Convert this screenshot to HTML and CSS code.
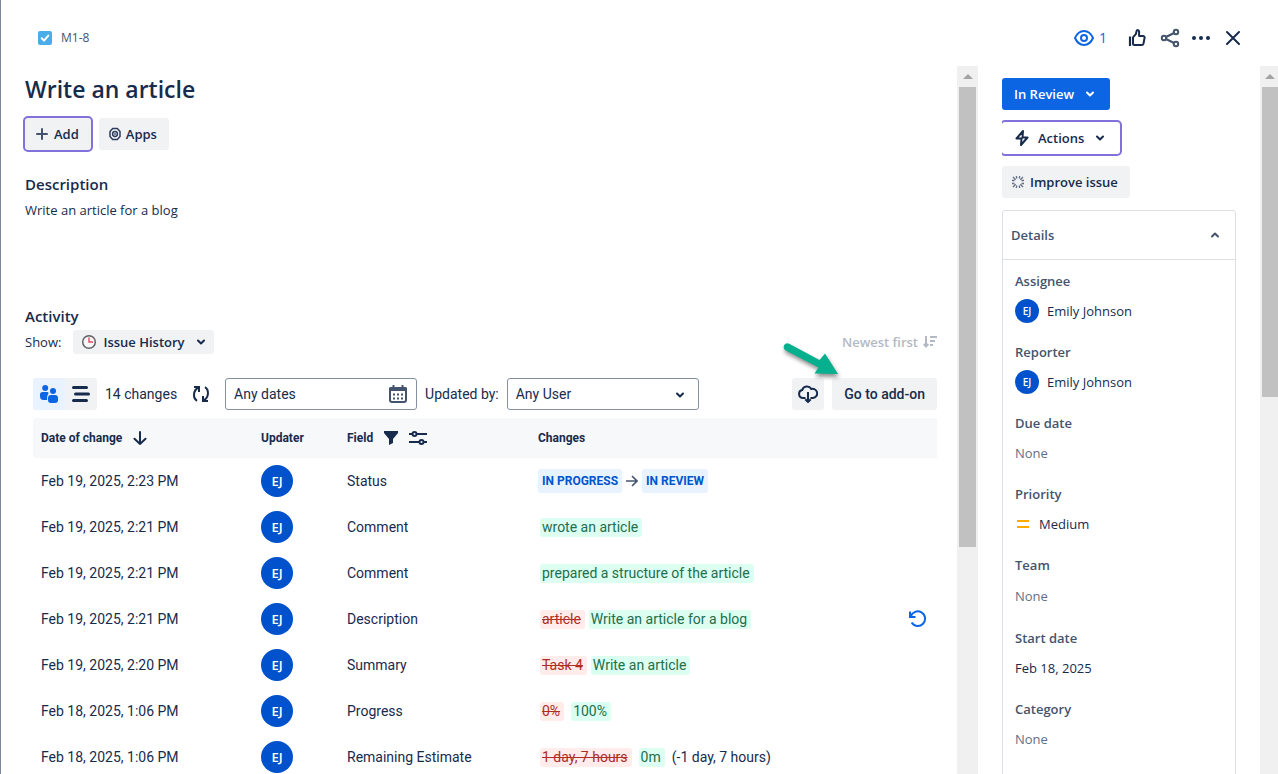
FILE: index.html
```html
<!DOCTYPE html>
<html lang="en">
<head>
<meta charset="utf-8">
<title>M1-8 Write an article</title>
<link rel="stylesheet" href="styles.css">
</head>
<body>
<div class="dialog">
  <header class="topbar">
    <a class="key" href="#">
      <svg width="14" height="14" viewBox="0 0 14 14"><rect width="14" height="14" rx="2" fill="#4bade8"/><path d="M3.7 7.3 6 9.6 10.3 4.6" fill="none" stroke="#fff" stroke-width="2" stroke-linecap="round" stroke-linejoin="round"/></svg>
      <span>M1-8</span>
    </a>
    <div class="top-actions">
      <button class="watch" aria-label="Watchers">
        <svg width="20" height="16" viewBox="0 0 20 16" fill="none" stroke="#0c66e4" stroke-width="2"><path d="M1 8C3 3.500 6.300 1 10 1s7 2.500 9 7c-2 4.500-5.300 7-9 7s-7-2.500-9-7z"/><circle cx="10" cy="8" r="3"/></svg>
        <span>1</span>
      </button>
      <button class="icon-btn" aria-label="Like">
        <svg width="18" height="18" viewBox="0 0 18 18" fill="none" stroke="#172b4d" stroke-width="2" stroke-linejoin="round"><path d="M2 7.500V17" stroke-width="2.200"/><path d="M5 8.300 7.800 5.200 8.600 2c.4-1.400 2.500-1 2.500.6V7h4c1 0 1.700.8 1.500 1.800l-1.100 5.700c-.2.900-.9 1.500-1.800 1.500H6.500A1.500 1.500 0 0 1 5 14.500z"/></svg>
      </button>
      <button class="icon-btn" aria-label="Share">
        <svg width="20" height="20" viewBox="0 0 20 20" fill="none" stroke="#44546f" stroke-width="2"><circle cx="4" cy="10" r="2.200"/><circle cx="16" cy="4" r="2.200"/><circle cx="16" cy="16" r="2.200"/><path d="m6 9 8-4M6 11l8 4"/></svg>
      </button>
      <button class="icon-btn" aria-label="More actions">
        <svg width="18" height="4" viewBox="0 0 18 4" fill="#172b4d"><circle cx="2" cy="2" r="2"/><circle cx="9" cy="2" r="2"/><circle cx="16" cy="2" r="2"/></svg>
      </button>
      <button class="icon-btn" aria-label="Close">
        <svg width="16" height="16" viewBox="0 0 16 16" fill="none" stroke="#172b4d" stroke-width="2" stroke-linecap="round"><path d="m2 2 12 12M14 2 2 14"/></svg>
      </button>
    </div>
  </header>

  <div class="panes">
    <main class="content">
      <h1>Write an article</h1>
      <div class="button-row">
        <button class="btn focused">
          <svg width="14" height="14" viewBox="0 0 14 14" stroke="#44546f" stroke-width="2" stroke-linecap="round"><path d="M7 2v10M2 7h10"/></svg>Add
        </button>
        <button class="btn">
          <svg width="12" height="14" viewBox="0 0 12 14" fill="none" stroke="#2c3e5d"><path stroke-width="1.500" stroke-linejoin="round" d="M3.700 1.500h4.600L11 4.500v5l-2.700 3H3.700L1 9.500v-5z"/><circle cx="6" cy="7" r="2.400" stroke-width="1.500"/><circle cx="6" cy="7" r=".5"/></svg>Apps
        </button>
      </div>
      <section class="description">
        <h2>Description</h2>
        <p>Write an article for a blog</p>
      </section>
      <section class="activity">
        <h2>Activity</h2>
        <div class="show-row">
          <span>Show:</span>
          <button class="btn compact">
            <svg width="16" height="16" viewBox="0 0 16 16" fill="none"><circle cx="8" cy="8" r="6.300" fill="#f7f7f8" stroke="#626266" stroke-width="1.500"/><path d="M8 3.500V8h4" stroke="#e5485d" stroke-width="1.400"/></svg>
            Issue History
            <svg class="chevron" width="8" height="6" viewBox="0 0 8 6"><path d="M1 1.500 4 4.500 7 1.500"/></svg>
          </button>
          <button class="sort">Newest first
            <svg width="14" height="12" viewBox="0 0 14 12" fill="none" stroke="#b3b9c4" stroke-width="2"><path d="M3 0v10M.7 8 3 10.500 5.300 8M7 1h7M7 5h5M7 9h3"/></svg>
          </button>
        </div>

        <div class="history">
          <div class="toolbar">
            <div class="toggle">
              <button class="on" aria-label="Group by user">
                <svg width="18" height="18" viewBox="0 0 18 18" fill="#0c66e4"><circle cx="5.200" cy="3" r="3"/><path d="M0 9.500C0 8 1 7 2.500 7h4.700C8.500 7 9 8 8 9.500c-.8 1.200-1 3-.8 5.500H3.500C1 15 0 13.500 0 11z"/><circle cx="13" cy="6" r="3"/><rect x="8" y="10" width="10" height="8" rx="3"/></svg>
              </button>
              <button aria-label="List">
                <svg width="18" height="16" viewBox="0 0 18 16" stroke="#172b4d" stroke-width="3" stroke-linecap="round"><path d="M1.500 1.500h13M3.500 8h13M1.500 14.500h13"/></svg>
              </button>
            </div>
            <span class="count">14 changes</span>
            <button class="refresh" aria-label="Refresh">
              <svg width="18" height="18" viewBox="0 0 18 18" fill="none" stroke="#172b4d" stroke-width="2"><path d="M2 2h5v5M6.500 2.500C.8 5.500.8 13 5 15.800M16 16h-5v-5M11.500 15.500c5.700-3 5.700-10.500 1.500-13.300"/></svg>
            </button>
            <label class="field-box">
              <input type="text" value="Any dates" aria-label="Dates">
              <svg width="18" height="18" viewBox="0 0 18 18"><path fill="none" stroke="#44546f" stroke-width="2" d="M1 3.500h16V15q0 2-2 2H3q-2 0-2-2z"/><path d="M1 2h16v4H1z" fill="#44546f"/><path d="M4.500 0v4m9-4v4" stroke="#44546f" stroke-width="2"/><path d="M4 9.500h10m-10 4h10" stroke="#44546f" stroke-width="2" stroke-dasharray="2 2"/></svg>
            </label>
            <label class="by" for="user">Updated by:</label>
            <div class="field-box">
              <select id="user"><option>Any User</option></select>
              <svg class="chevron over" width="8" height="6" viewBox="0 0 8 6"><path d="M1 1.500 4 4.500 7 1.500"/></svg>
            </div>
            <div class="tool-end">
              <button class="btn square" aria-label="Export">
                <svg width="20" height="18" viewBox="0 0 20 18" fill="none" stroke="#172b4d" stroke-width="2"><path d="M7.500 13H5a4 4 0 0 1-.8-7.900A5 5 0 0 1 13.300 4 4.600 4.600 0 1 1 15 13h-2.500M10 7v10M7.300 14.300 10 17l2.700-2.700"/></svg>
              </button>
              <button class="btn addon">Go to add-on</button>
            </div>
          </div>

          <table>
            <colgroup><col class="c-date"><col class="c-user"><col class="c-field"><col><col class="c-undo"></colgroup>
            <thead>
              <tr>
                <th><div class="th">Date of change<svg width="14" height="14" viewBox="0 0 14 14" fill="none" stroke="#172b4d" stroke-width="2" stroke-linecap="round"><path d="M7 1v12M1.500 7.800 7 13l5.500-5.200"/></svg></div></th>
                <th>Updater</th>
                <th><div class="th">Field<svg width="14" height="14" viewBox="0 0 14 14" fill="#172b4d"><path d="M0 0h14v2L9 8v4l-4 2V8L0 2z"/></svg><svg width="18" height="14" viewBox="0 0 18 14" fill="none" stroke="#172b4d" stroke-width="2"><path d="M0 3h3m5 0h10M0 11h10m5 0h3"/><circle cx="5.500" cy="3" r="2"/><circle cx="12.500" cy="11" r="2"/></svg></div></th>
                <th>Changes</th>
                <th></th>
              </tr>
            </thead>
            <tbody>
              <tr><td>Feb 19, 2025, 2:23 PM</td><td><span class="avatar">EJ</span></td><td>Status</td><td><div class="status"><span class="tag">IN PROGRESS</span><svg width="12" height="12" viewBox="0 0 12 12" fill="none" stroke="#44546f" stroke-width="1.600"><path d="M0 6h11M6 1l5 5-5 5"/></svg><span class="tag">IN REVIEW</span></div></td><td></td></tr>
              <tr><td>Feb 19, 2025, 2:21 PM</td><td><span class="avatar">EJ</span></td><td>Comment</td><td><div class="diff"><ins>wrote an article</ins></div></td><td></td></tr>
              <tr><td>Feb 19, 2025, 2:21 PM</td><td><span class="avatar">EJ</span></td><td>Comment</td><td><div class="diff"><ins>prepared a structure of the article</ins></div></td><td></td></tr>
              <tr><td>Feb 19, 2025, 2:21 PM</td><td><span class="avatar">EJ</span></td><td>Description</td><td><div class="diff"><del>article</del><ins>Write an article for a blog</ins></div></td><td><button class="undo" aria-label="Restore"><svg width="18" height="18" viewBox="0 0 18 18" fill="none" stroke="#0c66e4" stroke-width="2"><path d="M1 1.500V7h5.500M1.800 6.500a7.300 7.300 0 1 1 .8 6"/></svg></button></td></tr>
              <tr><td>Feb 19, 2025, 2:20 PM</td><td><span class="avatar">EJ</span></td><td>Summary</td><td><div class="diff"><del>Task 4</del><ins>Write an article</ins></div></td><td></td></tr>
              <tr><td>Feb 18, 2025, 1:06 PM</td><td><span class="avatar">EJ</span></td><td>Progress</td><td><div class="diff wide"><del>0%</del><ins>100%</ins></div></td><td></td></tr>
              <tr><td>Feb 18, 2025, 1:06 PM</td><td><span class="avatar">EJ</span></td><td>Remaining Estimate</td><td><div class="diff wide"><del>1 day, 7 hours</del><ins>0m</ins><span>(-1 day, 7 hours)</span></div></td><td></td></tr>
            </tbody>
          </table>
          <svg class="pointer" width="64" height="48" viewBox="0 0 64 48"><path d="M6.500 5.800a3.800 3.800 0 0 1 3.700-.1L40.500 22 46 15.500 59 36 35.500 35.500l4-6L6.800 12.500a3.800 3.800 0 0 1-.3-6.700z" fill="#06b08f"/></svg>
        </div>
      </section>
    </main>
    <div class="scrollbar"><span class="up"></span><span class="thumb"></span></div>

    <aside class="side">
      <button class="btn primary">In Review <svg class="chevron" width="8" height="6" viewBox="0 0 8 6"><path d="M1 1.500 4 4.500 7 1.500"/></svg></button>
      <div class="clip"><button class="btn focused plain">
        <svg width="14" height="16" viewBox="0 0 14 16" fill="none" stroke="#172b4d" stroke-width="2" stroke-linejoin="round"><path d="M8 1 1.500 8.500H6.500L6 15l6.500-7.500h-5z"/></svg>Actions
        <svg class="chevron" width="8" height="6" viewBox="0 0 8 6"><path d="M1 1.500 4 4.500 7 1.500"/></svg></button></div>
      <button class="btn improve"><svg width="12" height="12" viewBox="0 0 12 12" stroke="#626f86" stroke-width="1.300"><path d="M4.300 0l.5 2.500M7.700 0l-.5 2.500M4.300 12l.5-2.500M7.700 12l-.5-2.500M0 4.500h2.500M0 7.500h2.500M9.500 4.500H12M9.500 7.500H12M1 1l2.700 2.700M11 1 8.300 3.700M1 11l2.700-2.700M11 11 8.300 8.300"/></svg>Improve issue</button>
      <section class="details">
        <h2><button>Details <svg class="chevron" width="8" height="6" viewBox="0 0 8 6"><path d="M1 4.500 4 1.500 7 4.500"/></svg></button></h2>
        <dl>
          <div><dt>Assignee</dt><dd><span class="avatar small">EJ</span>Emily Johnson</dd></div>
          <div><dt>Reporter</dt><dd><span class="avatar small">EJ</span>Emily Johnson</dd></div>
          <div><dt>Due date</dt><dd class="none">None</dd></div>
          <div><dt>Priority</dt><dd><svg width="16" height="16" viewBox="0 0 16 16" stroke="#ffab00" stroke-width="2"><path d="M2 5h12M2 11h12"/></svg>Medium</dd></div>
          <div><dt>Team</dt><dd class="none roomy">None</dd></div>
          <div><dt>Start date</dt><dd>Feb 18, 2025</dd></div>
          <div><dt>Category</dt><dd class="none">None</dd></div>
        </dl>
      </section>
    </aside>
    <div class="scrollbar edge"><span class="up"></span><span class="thumb"></span></div>
  </div>
</div>
</body>
</html>
```

FILE: styles.css
```css
* { box-sizing: border-box; }
body {
  margin: 0;
  font: 13px/20px "Open Sans", sans-serif;
  color: #172b4d;
  background: #fff;
}
svg { display: block; flex: none; }
button { font: inherit; color: inherit; border: 0; padding: 0; background: none; }
h1, h2, p, dl, dd { margin: 0; }

.dialog {
  height: 100vh;
  display: flex;
  flex-direction: column;
  overflow: hidden;
  border-left: 1px solid #7a869a;
}

.topbar {
  display: flex;
  justify-content: space-between;
  align-items: center;
  flex: none;
  height: 66px;
  padding: 10px 36px 0 37px;
}
.key { display: flex; align-items: center; gap: 9px; font-size: 12px; color: #44546f; text-decoration: none; }
.top-actions { display: flex; align-items: center; gap: 14px; }
.top-actions .icon-btn { display: grid; place-items: center; width: 18px; height: 20px; }
.watch { display: flex; align-items: center; gap: 5px; margin-right: 7px; color: #0c66e4; font-size: 14px; }

.panes { flex: 1; min-height: 0; display: flex; }
.content { flex: 1; min-width: 0; overflow: hidden; padding: 8px 20px 0 24px; }
h1 { font-size: 23px; line-height: 30px; font-weight: 600; }
h2 { font-size: 15px; line-height: 20px; font-weight: 600; }

.btn {
  display: inline-flex;
  align-items: center;
  justify-content: center;
  gap: 5px;
  height: 32px;
  padding: 0 12px;
  border-radius: 3px;
  background: #f1f2f4;
  font-weight: 600;
}
.focused { outline: 2px solid #8270db; }
.chevron path { fill: none; stroke: currentColor; stroke-width: 2; stroke-linecap: round; stroke-linejoin: round; }

.button-row { display: flex; gap: 8px; margin-top: 14px; }
.button-row .btn { padding: 0 12px 0 10px; }

.description { margin-top: 24px; min-height: 132px; }
.description p { margin-top: 6px; }

.show-row { display: flex; align-items: center; gap: 12px; margin-top: 4px; }
.compact { height: 24px; gap: 6px; padding: 0 9px 0 8px; }
.compact .chevron { margin-left: 6px; }
.sort { display: flex; align-items: center; gap: 5px; margin-left: auto; color: #b3b9c4; font-weight: 600; }

.history { position: relative; margin: 24px 0 0 8px; font: 14px/20px Roboto, sans-serif; }
.toolbar { display: flex; align-items: center; gap: 8px; }
.toggle { display: flex; height: 32px; border-radius: 3px; overflow: hidden; background: #f1f2f4; }
.toggle button { display: grid; place-items: center; width: 32px; }
.toggle .on { background: #e9f2ff; }
.refresh { display: grid; place-items: center; width: 32px; height: 32px; }
.field-box {
  position: relative;
  display: flex;
  align-items: center;
  width: 192px;
  height: 32px;
  padding-right: 9px;
  border: 1px solid #8590a2;
  border-radius: 3px;
}
.field-box input, .field-box select {
  flex: 1;
  min-width: 0;
  padding: 0 8px;
  border: 0;
  background: none;
  appearance: none;
  font: inherit;
  color: inherit;
}
.over { position: absolute; right: 14px; top: 13px; pointer-events: none; }
.tool-end { display: flex; gap: 8px; margin-left: auto; }
.tool-end .btn { font-weight: 500; }
.tool-end .square { width: 32px; padding: 0; }

table { width: 100%; margin-top: 8px; border-collapse: collapse; table-layout: fixed; }
.c-date { width: 220px; }
.c-user { width: 86px; }
.c-field { width: 191px; }
.c-undo { width: 28px; }
th { height: 40px; padding: 0 8px; background: #f7f8f9; text-align: left; font-size: 12px; font-weight: 700; }
th:first-child { border-radius: 3px 0 0 3px; }
th:last-child { padding: 0; }
.th { display: flex; align-items: center; gap: 11px; }
td { height: 46px; padding: 0 8px; white-space: nowrap; }
td:last-child { padding: 0; }
.avatar {
  display: grid;
  place-items: center;
  width: 32px;
  height: 32px;
  border-radius: 50%;
  background: #0052cc;
  color: #fff;
  font: 600 13px/20px "Open Sans", sans-serif;
}
.small { width: 24px; height: 24px; font-size: 10px; }
.status { display: flex; align-items: center; gap: 4px; }
.tag { height: 24px; padding: 0 4px; border-radius: 3px; background: #e9f2ff; color: #0055cc; font-size: 12px; line-height: 24px; font-weight: 700; }
.diff { display: flex; align-items: center; gap: 4px; padding-left: 2px; }
.wide { gap: 7px; }
.diff ins, .diff del { padding: 0 4px 0 2px; border-radius: 3px; line-height: 19px; }
.diff ins { background: #dcfff1; color: #216e4e; text-decoration: none; }
.diff del { background: #ffeceb; color: #ae2e24; }
.undo { display: block; }

.pointer { position: absolute; right: 94px; top: -40px; filter: drop-shadow(1px 3px 2px rgba(0, 0, 0, .45)); }

.scrollbar { width: 21px; flex: none; display: flex; flex-direction: column; align-items: center; background: #f0f0f0; }
.up { height: 21px; display: grid; place-items: center; }
.up::before { content: ""; border: 5px solid transparent; border-top: 0; border-bottom-color: #a3a3a3; }
.thumb { width: 17px; height: 65%; background: #c1c1c1; }
.edge { width: 18px; align-items: flex-end; }
.edge .up { width: 16px; }
.edge .thumb { width: 16px; height: 310px; }

.side { width: 282px; flex: none; padding: 12px 24px 0; overflow: hidden; display: flex; flex-direction: column; align-items: flex-start; gap: 12px; }
.side .btn, .details { flex: none; }
.primary { gap: 12px; padding: 0 16px 0 12px; background: #0c66e4; color: #fff; }
.clip { flex: none; display: flex; margin: -2px 0; padding: 2px 2px 2px 0; overflow: hidden; }
.plain { gap: 9px; padding: 0 16px 0 13px; background: #fff; }
.plain .chevron { margin-left: 3px; }
.improve { gap: 6px; padding: 0 12px 0 10px; }
.details { width: 100%; border: 1px solid #dcdfe4; border-radius: 3px; }
.details h2 { border-bottom: 1px solid #dcdfe4; font-size: 13px; color: #44546f; }
.details h2 button { display: flex; justify-content: space-between; align-items: center; width: 100%; height: 48px; padding: 0 16px 0 8px; }
dl { padding: 11px 12px 24px; display: flex; flex-direction: column; gap: 11px; }
dt { font-weight: 600; color: #44546f; }
dd { display: flex; align-items: center; gap: 8px; height: 40px; }
.none { color: #626f86; }
.roomy { height: 42px; }
```
